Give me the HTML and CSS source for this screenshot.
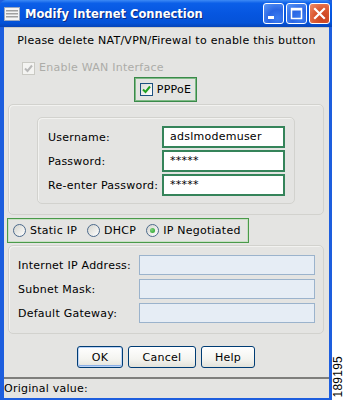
FILE: index.html
```html
<!DOCTYPE html>
<html lang="en">
<head>
    <meta charset="UTF-8">
    <title>Modify Internet Connection</title>
    <link rel="stylesheet" href="styles.css">
</head>
<body>
    <div class="screen">
        <div class="window">
            <div class="titlebar">
                <svg class="app-icon" width="16" height="14" viewBox="0 0 16 14">
                    <rect x="0.5" y="0.5" width="15" height="13" fill="#f4f4f4" stroke="#9aa8c0"/>
                    <rect x="2" y="3" width="12" height="1.5" fill="#a0a0a0"/>
                    <rect x="2" y="6" width="12" height="1.5" fill="#a0a0a0"/>
                    <rect x="2" y="9" width="12" height="1.5" fill="#a0a0a0"/>
                </svg>
                <span class="title">Modify Internet Connection</span>
                <div class="controls">
                    <span class="ctl">
                        <svg width="21" height="21" viewBox="0 0 21 21"><rect x="5" y="13" width="6" height="3" fill="#fff"/></svg>
                    </span>
                    <span class="ctl">
                        <svg width="21" height="21" viewBox="0 0 21 21"><rect x="5.5" y="5.5" width="10" height="10" fill="none" stroke="#fff" stroke-width="1.5"/><rect x="5" y="5" width="11" height="2.5" fill="#fff"/></svg>
                    </span>
                    <span class="ctl close">
                        <svg width="21" height="21" viewBox="0 0 21 21"><path d="M6 6 L15 15 M15 6 L6 15" stroke="#fff" stroke-width="2.2" stroke-linecap="square"/></svg>
                    </span>
                </div>
            </div>

            <div class="body">
                <p class="note">Please delete NAT/VPN/Firewal to enable this button</p>

                <div class="check disabled">
                    <span class="box"><svg width="9" height="9" viewBox="0 0 9 9"><path d="M1 4.5 L3.5 7 L8 1.5" fill="none" stroke="#b8b8b8" stroke-width="2"/></svg></span>
                    Enable WAN Interface
                </div>

                <div class="pppoe-row">
                    <div class="check framed">
                        <span class="box"><svg width="9" height="9" viewBox="0 0 9 9"><path d="M1 4.5 L3.5 7 L8 1.5" fill="none" stroke="#21a121" stroke-width="2"/></svg></span>
                        PPPoE
                    </div>
                </div>

                <div class="group login">
                    <div class="inner">
                        <div class="field"><span class="label">Username:</span><div class="text active">adslmodemuser</div></div>
                        <div class="field"><span class="label">Password:</span><div class="text active">*****</div></div>
                        <div class="field"><span class="label">Re-enter Password:</span><div class="text active">*****</div></div>
                    </div>
                </div>

                <div class="radios">
                    <span class="radio"><span class="dot"></span>Static IP</span>
                    <span class="radio"><span class="dot"></span>DHCP</span>
                    <span class="radio on"><span class="dot"></span>IP Negotiated</span>
                </div>

                <div class="group ip">
                    <div class="field"><span class="label">Internet IP Address:</span><div class="text off"></div></div>
                    <div class="field"><span class="label">Subnet Mask:</span><div class="text off"></div></div>
                    <div class="field"><span class="label">Default Gateway:</span><div class="text off"></div></div>
                </div>

                <div class="buttons">
                    <button class="btn default">OK</button>
                    <button class="btn cancel">Cancel</button>
                    <button class="btn help">Help</button>
                </div>
            </div>

            <div class="status">Original value:</div>
        </div>
        <div class="side"><span>189195</span></div>
    </div>
</body>
</html>
```

FILE: styles.css
```css
body {
    margin: 0;
    background-color: #ffffff;
    font-family: 'DejaVu Sans', sans-serif;
    font-size: 11px;
    letter-spacing: 0.25px;
    color: #000000;
}
.screen {
    display: flex;
    width: 344px;
    height: 400px;
}
.window {
    width: 332px;
    height: 400px;
    box-sizing: border-box;
    display: flex;
    flex-direction: column;
    background-color: #1d5ede;
    padding: 0 3px 2px 4px;
}
.titlebar {
    height: 27px;
    margin: 0 -3px 0 -4px;
    padding: 0 2px 0 4px;
    display: flex;
    align-items: center;
    background: linear-gradient(#3d8af5 0%, #0b5fe8 12%, #0656e0 50%, #0452d8 85%, #0644b8 100%);
    border-radius: 6px 6px 0 0;
}
.app-icon {
    flex: none;
    margin-right: 5px;
}
.title {
    flex: 1;
    color: #ffffff;
    font-weight: bold;
    font-size: 11.5px;
    letter-spacing: 0;
    text-shadow: 1px 1px 0 #0a2a80;
}
.controls {
    display: flex;
    gap: 2px;
}
.ctl {
    width: 21px;
    height: 21px;
    box-sizing: border-box;
    border: 1px solid #ffffff;
    border-radius: 3px;
    background: radial-gradient(circle at 70% 75%, #3c7cf0 0%, #2a66e4 45%, #5c98f6 100%);
    display: flex;
    align-items: center;
    justify-content: center;
}
.ctl svg {
    margin: -1px;
}
.ctl.close {
    background: radial-gradient(circle at 70% 75%, #c8401e 0%, #dc5a32 50%, #ef8f6c 100%);
}
.body {
    flex: 1;
    background-color: #e4e4e2;
    display: flex;
    flex-direction: column;
    border-top: 1px solid #c9c9c6;
}
.note {
    margin: 6px 0 0;
    line-height: 14px;
    text-align: center;
}
.check {
    display: flex;
    align-items: center;
    line-height: 16px;
}
.check .box {
    width: 13px;
    height: 13px;
    box-sizing: border-box;
    border: 1px solid #1c5180;
    background: linear-gradient(135deg, #dcdcd7, #ffffff);
    margin-right: 4px;
    display: flex;
    align-items: center;
    justify-content: center;
}
.check.disabled {
    margin: 12px 0 0 18px;
    color: #acaca8;
}
.check.disabled .box {
    border-color: #cacac4;
    background: #f4f4f2;
}
.pppoe-row {
    display: flex;
    justify-content: center;
    margin-top: 1px;
}
.check.framed {
    height: 25px;
    box-sizing: border-box;
    padding: 0 5px 0 5px;
    border: 1px solid #3a8a4a;
    box-shadow: inset 0 0 0 1px #7fba86;
    margin-left: -2px;
}
.group {
    margin: 2px 5px 0 4px;
    border: 1px solid #d2d2ce;
    border-radius: 5px;
    box-shadow: inset 1px 1px 0 #f2f2f0;
}
.login {
    padding: 12px 28px 10px;
}
.inner {
    border: 1px solid #d2d2ce;
    border-radius: 5px;
    box-shadow: inset 1px 1px 0 #f2f2f0;
    padding: 8px 9px 7px 10px;
    display: flex;
    flex-direction: column;
    gap: 2px;
}
.field {
    display: flex;
    align-items: center;
    justify-content: space-between;
}
.text {
    box-sizing: border-box;
    padding: 0 6px;
}
.text.active {
    width: 123px;
    height: 22px;
    line-height: 18px;
    border: 2px solid #35845a;
    background-color: #ffffff;
}
.radios {
    margin: 3px 0 0 3px;
    width: 242px;
    height: 25px;
    box-sizing: border-box;
    border: 1px solid #4a9a4a;
    box-shadow: inset 0 0 0 1px #c8e0c4;
    display: flex;
    align-items: center;
    padding-left: 5px;
    gap: 10px;
}
.radio {
    display: flex;
    align-items: center;
}
.radio .dot {
    width: 13px;
    height: 13px;
    box-sizing: border-box;
    border: 1px solid #4c6a8c;
    border-radius: 50%;
    background: linear-gradient(135deg, #d4d4ce, #ffffff);
    margin-right: 4px;
    display: flex;
    align-items: center;
    justify-content: center;
}
.radio.on .dot::after {
    content: "";
    width: 5px;
    height: 5px;
    border-radius: 50%;
    background: radial-gradient(circle at 35% 35%, #7cd07c, #21a121);
}
.ip {
    padding: 9px 8px 10px 9px;
    display: flex;
    flex-direction: column;
    gap: 4px;
    height: 89px;
    box-sizing: border-box;
}
.text.off {
    width: 176px;
    height: 20px;
    border: 1px solid #9bb3cc;
    background-color: #e6edf5;
}
.buttons {
    display: flex;
    justify-content: center;
    gap: 5px;
    margin-top: 12px;
    padding-right: 1px;
}
.btn {
    height: 22px;
    font-family: 'DejaVu Sans', sans-serif;
    font-size: 11px;
    letter-spacing: 0.25px;
    color: #000000;
    border: 1px solid #003c74;
    border-radius: 3px;
    background: linear-gradient(#ffffff 0%, #f4f4f0 60%, #e2e2da 100%);
    padding: 0;
}
.btn.default {
    width: 46px;
    box-shadow: inset 0 0 0 1px #bcd4f6, inset 0 -1px 0 1px #89aee6;
}
.btn.cancel {
    width: 68px;
}
.btn.help {
    width: 54px;
}
.status {
    height: 21px;
    line-height: 20px;
    background-color: #e4e4e2;
    border-top: 2px solid #7e7e7c;
    padding-left: 0;
    box-sizing: border-box;
}
.side {
    flex: 1;
    display: flex;
    flex-direction: column;
    justify-content: flex-end;
    align-items: center;
    padding-bottom: 2px;
}
.side span {
    writing-mode: vertical-rl;
    transform: rotate(180deg);
    font-family: 'Liberation Sans', sans-serif;
    font-size: 12px;
    line-height: 10px;
}
```
